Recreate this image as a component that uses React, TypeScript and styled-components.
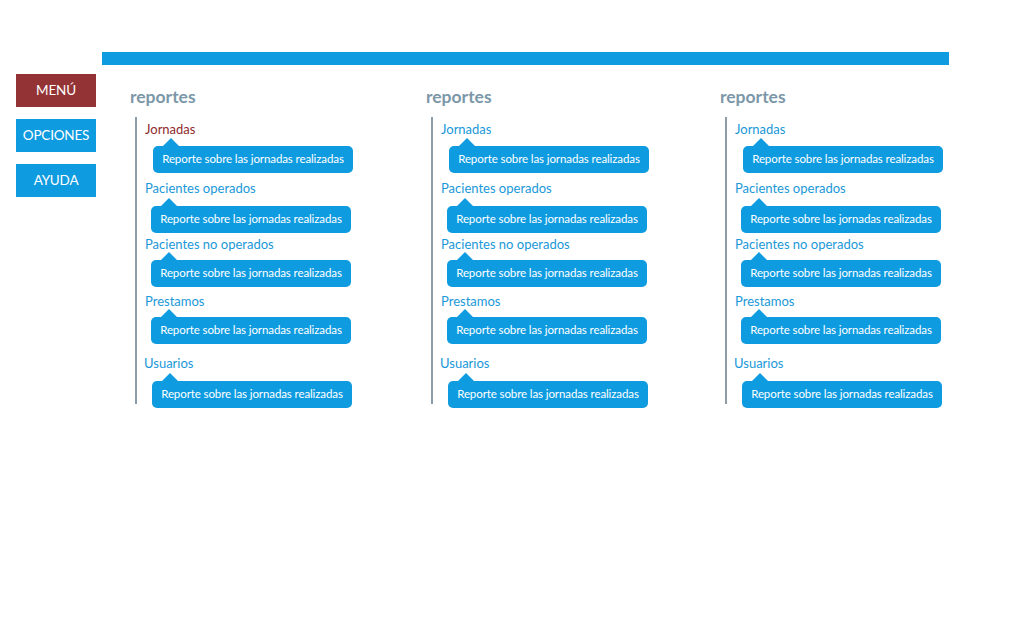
import React from "react";
import styled, { createGlobalStyle } from "styled-components";

const GlobalStyle = createGlobalStyle`
  html, body {
    margin: 0;
    padding: 0;
    background: #ffffff;
  }
  body {
    font-family: "Lato", "Open Sans", sans-serif;
  }
`;

type Item = {
  label: string;
  labelGap: number;
  bubbleGap: number;
  bubbleX: number;
  labelX?: number;
};

const items: Item[] = [
  { label: "Jornadas", labelGap: 4, bubbleGap: 9, bubbleX: 8 },
  { label: "Pacientes operados", labelGap: 7, bubbleGap: 10, bubbleX: 6 },
  { label: "Pacientes no operados", labelGap: 3, bubbleGap: 8, bubbleX: 6 },
  { label: "Prestamos", labelGap: 6, bubbleGap: 8, bubbleX: 6 },
  { label: "Usuarios", labelGap: 11, bubbleGap: 10, bubbleX: 7, labelX: -1 },
];

const columns = [{ active: true }, { active: false }, { active: false }];

export default function App() {
  return (
    <>
      <GlobalStyle />
      <TopBar />
      <Layout>
        <Sidebar>
          <NavButton $variant="red">MENÚ</NavButton>
          <NavButton>OPCIONES</NavButton>
          <NavButton $gap={13}>AYUDA</NavButton>
        </Sidebar>
        <Columns>
          {columns.map((col, ci) => (
            <Column key={ci}>
              <Heading>reportes</Heading>
              <List>
                {items.map((it, i) => (
                  <Entry key={i}>
                    <Label
                      $gap={it.labelGap}
                      $x={it.labelX ?? 0}
                      $active={col.active && i === 0}
                    >
                      {it.label}
                    </Label>
                    <Bubble $gap={it.bubbleGap} $x={it.bubbleX}>
                      Reporte sobre las jornadas realizadas
                    </Bubble>
                  </Entry>
                ))}
              </List>
            </Column>
          ))}
        </Columns>
      </Layout>
    </>
  );
}

const TopBar = styled.div`
  margin: 52px 0 0 102px;
  width: 847px;
  height: 13px;
  background-color: #0f9be0;
`;

const Layout = styled.div`
  display: flex;
  align-items: flex-start;
  padding-left: 16px;
  margin-top: 9px;
`;

const Sidebar = styled.nav`
  display: flex;
  flex-direction: column;
  width: 80px;
`;

const NavButton = styled.div<{ $variant?: "red" | "blue"; $gap?: number }>`
  display: flex;
  align-items: center;
  justify-content: center;
  height: 33px;
  padding-bottom: 2px;
  box-sizing: border-box;
  margin-bottom: ${(p) => p.$gap ?? 12}px;
  background-color: ${(p) => (p.$variant === "red" ? "#943336" : "#0f9be0")};
  color: #ffffff;
  font-size: 13.5px;
  letter-spacing: -0.2px;
`;

const Columns = styled.div`
  display: flex;
  margin-left: 34px;
`;

const Column = styled.section`
  width: 296px;
  flex: none;
  &:nth-child(2) {
    width: 294px;
  }
`;

const Heading = styled.h2`
  margin: 13px 0 0;
  height: 20px;
  line-height: 20px;
  font-size: 17.5px;
  font-weight: 700;
  color: #7c97a8;
`;

const List = styled.div`
  position: relative;
  margin: 10px 0 0 5px;
  padding-left: 10px;

  &::before {
    content: "";
    position: absolute;
    left: 0;
    top: 0;
    bottom: 4px;
    width: 1.5px;
    background-color: #8d9ca7;
  }
`;

const Entry = styled.div`
  display: flex;
  flex-direction: column;
  align-items: flex-start;
`;

const Label = styled.div<{ $gap: number; $x: number; $active: boolean }>`
  margin-top: ${(p) => p.$gap}px;
  margin-left: ${(p) => p.$x}px;
  height: 16px;
  line-height: 16px;
  font-size: 13px;
  color: ${(p) => (p.$active ? "#8e2b2d" : "#1a98d8")};
`;

const Bubble = styled.div<{ $gap: number; $x: number }>`
  position: relative;
  box-sizing: border-box;
  margin-top: ${(p) => p.$gap}px;
  margin-left: ${(p) => p.$x}px;
  width: 200px;
  height: 27px;
  padding-bottom: 1px;
  border-radius: 5px;
  background-color: #0f9be0;
  color: #ffffff;
  font-size: 11.5px;
  line-height: 26px;
  text-align: center;
  letter-spacing: -0.1px;

  &::before {
    content: "";
    position: absolute;
    left: 10px;
    top: -8px;
    border-left: 8px solid transparent;
    border-right: 8px solid transparent;
    border-bottom: 8px solid #0f9be0;
  }
`;
